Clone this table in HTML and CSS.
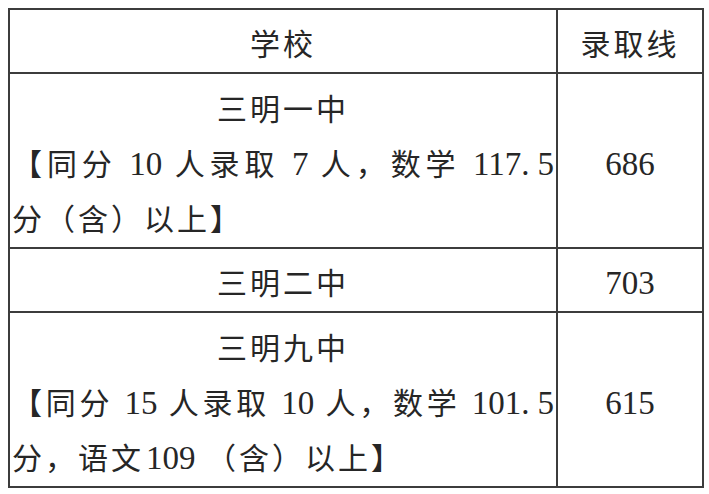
FILE: index.html
```html
<!DOCTYPE html>
<html lang="zh-CN">
<head>
<meta charset="utf-8">
<title>录取线</title>
<link rel="stylesheet" href="styles.css">
</head>
<body>
<table class="score-table">
  <colgroup>
    <col class="col-school">
    <col class="col-score">
  </colgroup>
  <tr class="row-head">
    <td class="cell-center">学校</td>
    <td class="cell-center">录取线</td>
  </tr>
  <tr class="row-tall">
    <td class="cell-school">
      <span class="line center">三明一中</span>
      <span class="line full">【同分 <span class="num">10</span> 人录取 <span class="num">7</span> 人，数学 <span class="num">117<span class="dot">.</span>5</span></span>
      <span class="line">分（含）以上】</span>
    </td>
    <td class="cell-center"><span class="num">686</span></td>
  </tr>
  <tr class="row-short">
    <td class="cell-center">三明二中</td>
    <td class="cell-center"><span class="num">703</span></td>
  </tr>
  <tr class="row-tall2">
    <td class="cell-school">
      <span class="line center">三明九中</span>
      <span class="line full">【同分 <span class="num">15</span> 人录取 <span class="num">10</span> 人，数学 <span class="num">101<span class="dot">.</span>5</span></span>
      <span class="line">分，语文<span class="num gap">109</span> （含）以上】</span>
    </td>
    <td class="cell-center"><span class="num">615</span></td>
  </tr>
</table>
</body>
</html>
```
FILE: styles.css
```css
html, body {
  margin: 0;
  padding: 0;
  background: #ffffff;
}
body {
  padding: 8px 0 0 8px;
  font-family: "Liberation Serif", "Noto Sans CJK SC", serif;
  color: #262626;
}
.score-table {
  border-collapse: collapse;
  width: 694px;
  table-layout: fixed;
  font-size: 30px;
  letter-spacing: 3px;
  line-height: 55px;
}
.col-school { width: 548px; }
.col-score { width: 146px; }
.score-table td {
  border: 2px solid #3c3c3c;
  padding: 7px 2px 0 2px;
  vertical-align: middle;
}
.score-table td.cell-school { padding-top: 8px; }
.row-head td { height: 55px; }
.row-tall td { height: 165px; }
.row-short td { height: 55px; }
.row-tall2 td { height: 164px; }
.cell-center { text-align: center; }
.cell-school { text-align: left; }
.line { display: block; white-space: nowrap; }
.line.center { text-align: center; }
.line.full { text-align: justify; text-align-last: justify; }
.num {
  font-size: 33px;
  letter-spacing: 0;
}
.num.gap { margin-left: 2px; }
.dot { letter-spacing: 8px; }
```
